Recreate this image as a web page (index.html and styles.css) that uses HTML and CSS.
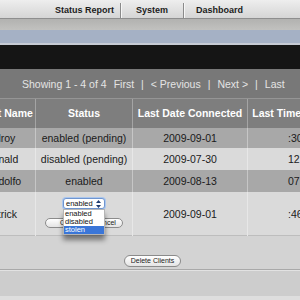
FILE: index.html
```html
<!DOCTYPE html>
<html>
  <head>
    <title>Clients</title>
    <link rel="stylesheet" href="styles.css">
  </head>
  <body>
    <div class="nav">
      <a class="tab tab-first">Status Report</a>
      <span class="sep"></span>
      <a class="tab">System</a>
      <span class="sep"></span>
      <a class="tab tab-last">Dashboard</a>
    </div>
    <div class="band-gray"></div>
    <div class="band-blue"></div>
    <div class="band-black"></div>

    <div class="panel">
      <div class="pager">
        <span>Showing 1 - 4 of 4</span>
        <a>First</a>
        <span>|</span>
        <a>&lt; Previous</a>
        <span>|</span>
        <a>Next &gt;</a>
        <span>|</span>
        <a>Last</a>
      </div>

      <table class="clients">
        <colgroup>
          <col class="c-name">
          <col class="c-status">
          <col class="c-date">
          <col class="c-time">
        </colgroup>
        <tr>
          <th>Client Name</th>
          <th>Status</th>
          <th>Last Date Connected</th>
          <th>Last Time Connected</th>
        </tr>
        <tr class="odd short">
          <td class="name">Delroy</td>
          <td>enabled (pending)</td>
          <td>2009-09-01</td>
          <td class="time">:30:12</td>
        </tr>
        <tr class="even">
          <td class="name">Donald</td>
          <td>disabled (pending)</td>
          <td>2009-07-30</td>
          <td class="time">12:14:51</td>
        </tr>
        <tr class="odd">
          <td class="name">Rodolfo</td>
          <td>enabled</td>
          <td>2009-08-13</td>
          <td class="time">07:41:09</td>
        </tr>
        <tr class="even">
          <td class="name">Patrick</td>
          <td class="edit">
            <div class="picker">
              <div class="select">
                <span>enabled</span>
                <svg class="stepper" width="5" height="8" viewBox="0 0 5 8">
                  <path d="M2.5 0 L5 3 L0 3 Z M2.5 8 L5 5 L0 5 Z" fill="#1f3c70"/>
                </svg>
              </div>
              <div class="options">
                <div class="option">enabled</div>
                <div class="option">disabled</div>
                <div class="option option-active">stolen</div>
              </div>
            </div>
            <div class="btns">
              <button class="pill pill-ok">OK</button>
              <button class="pill pill-cancel">Cancel</button>
            </div>
          </td>
          <td>2009-09-01</td>
          <td class="time">:46:03</td>
        </tr>
      </table>
    </div>

    <div class="actions">
      <button class="pill">Delete Clients</button>
    </div>
    <div class="bottom"></div>
  </body>
</html>
```

FILE: styles.css
```css
body {
  margin: 0;
  font-family: "Liberation Sans", Arial, sans-serif;
  background-color: #dedede;
  overflow: hidden;
}

/* top navigation */
.nav {
  display: flex;
  height: 18px;
  padding-left: 40px;
  background: linear-gradient(#eeeeee, #d5d5d5);
  border-bottom: 1px solid #8e8e8e;
}

.tab {
  padding: 0 15px;
  font-size: 9px;
  font-weight: bold;
  color: #1c1c1c;
  line-height: 20px;
}

.tab-first {
  padding-right: 6px;
}

.tab-last {
  padding-left: 12px;
}

.sep {
  width: 1px;
  margin-top: 3px;
  background-color: #8a8a8a;
  box-shadow: 1px 0 0 #f6f6f6;
}

.band-gray {
  height: 11px;
  background: linear-gradient(#b2b2b0, #c1c1bf);
}

.band-blue {
  height: 13px;
  background-color: #a5b1c5;
  border-bottom: 2px solid #c6cbd4;
}

.band-black {
  height: 24px;
  background-color: #151515;
}

/* client table */
.panel {
  position: relative;
  z-index: 1;
}

.pager {
  display: flex;
  align-items: center;
  gap: 7px;
  height: 29px;
  padding-left: 22px;
  background-color: #787878;
  border-bottom: 1px solid #959595;
  font-size: 10.5px;
  color: #e4e4e4;
}

.clients {
  border-collapse: collapse;
  table-layout: fixed;
  width: 393px;
  margin-left: -31px;
  font-size: 10.5px;
  border-bottom: 1px solid #bdbdbd;
}

.c-name {
  width: 66px;
}

.c-status {
  width: 97px;
}

.c-date,
.c-time {
  width: 115px;
}

th {
  padding: 8px 0;
  line-height: 13px;
  background-color: #7e7e7e;
  color: #fff;
  font-weight: bold;
  border-left: 1px solid #a4a4a4;
  white-space: nowrap;
}

td {
  padding: 5px 0;
  line-height: 12px;
  color: #1a1a1a;
  text-align: center;
  border-left: 1px solid rgba(255, 255, 255, 0.35);
  white-space: nowrap;
}

.short td {
  padding: 4px 0;
}

.odd td {
  background-color: #a8a8a8;
}

.even td {
  background-color: #dadada;
}

td.name {
  text-align: left;
  padding-left: 15px;
}

td.time {
  text-align: left;
  padding-left: 40px;
}

td.edit {
  vertical-align: top;
  padding: 6px 0 7px;
  line-height: 0;
}

/* status picker with open list */
.picker {
  position: relative;
  width: 42px;
  height: 11px;
  margin: 0 auto;
}

.select {
  display: flex;
  justify-content: space-between;
  align-items: center;
  box-sizing: border-box;
  height: 11px;
  padding: 0 3px 0 2px;
  border: 1px solid #6f95cf;
  border-radius: 3px;
  box-shadow: 0 0 0 1px #aac6ee;
  background-color: #fff;
  font-size: 7.5px;
  line-height: 9px;
  color: #111;
}

.options {
  position: absolute;
  top: 11px;
  left: 0;
  z-index: 2;
  box-sizing: border-box;
  width: 42px;
  background-color: #fff;
  border: 1px solid #b5b5b5;
  box-shadow: 0 5px 5px rgba(0, 0, 0, 0.45);
  font-size: 7.5px;
  line-height: 8px;
  text-align: left;
  color: #111;
}

.option {
  padding-left: 1px;
}

.option-active {
  background-color: #3a76d8;
  color: #fff;
}

.btns {
  display: flex;
  justify-content: center;
  gap: 2px;
  height: 10px;
  margin-top: 9px;
}

.pill {
  box-sizing: border-box;
  height: 12px;
  margin: 0;
  padding: 0 5.5px;
  border: 1px solid #8b8b8b;
  border-radius: 6px;
  background: linear-gradient(#ffffff, #e4e4e4);
  font-family: "Liberation Sans", Arial, sans-serif;
  font-size: 7px;
  line-height: 10px;
  color: #222;
}

.btns .pill {
  height: 10px;
  padding: 0;
  line-height: 8px;
}

.pill-ok {
  width: 40px;
}

.pill-cancel {
  width: 36px;
}

/* footer */
.actions {
  box-sizing: border-box;
  height: 34px;
  padding: 13px 0 0 5px;
  text-align: center;
  background-color: #d3d3d3;
  border-bottom: 1px solid #a9a9a9;
}

.bottom {
  height: 25px;
  background-color: #cdcdcd;
  border-top: 1px solid #e2e2e2;
}
```
